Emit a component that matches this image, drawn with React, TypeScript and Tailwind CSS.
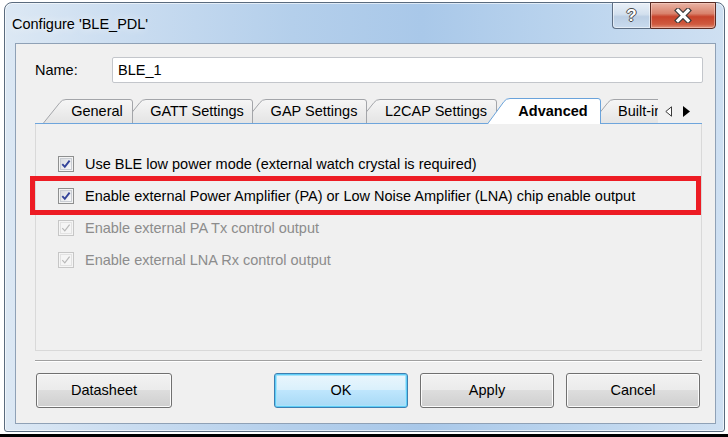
import clsx from 'clsx';

const TABS = [
  { label: 'General', w: 90, width: 'w-[90px]', z: 'z-[6]', ml: '' },
  { label: 'GATT Settings', w: 130, width: 'w-[130px]', z: 'z-[5]', ml: '-ml-[10px]' },
  { label: 'GAP Settings', w: 124, width: 'w-[124px]', z: 'z-[4]', ml: '-ml-[10px]' },
  { label: 'L2CAP Settings', w: 140, width: 'w-[140px]', z: 'z-[3]', ml: '-ml-[10px]' },
  { label: 'Advanced', w: 114, width: 'w-[114px]', z: 'z-[10]', ml: '-ml-[10px]', active: true },
  { label: 'Built-in', w: 67, width: 'w-[67px]', z: 'z-[1]', ml: '-ml-[10px]', clipped: true },
];

const OPTIONS = [
  { label: 'Use BLE low power mode (external watch crystal is required)', disabled: false },
  { label: 'Enable external Power Amplifier (PA) or Low Noise Amplifier (LNA) chip enable output', disabled: false },
  { label: 'Enable external PA Tx control output', disabled: true },
  { label: 'Enable external LNA Rx control output', disabled: true },
];

const S = 22;

function TabShape({ w, h, active, clipped, id }: { w: number; h: number; active?: boolean; clipped?: boolean; id: string }) {
  const right = clipped ? w : w - 0.5;
  const fill = `M0.5 ${h} L${S - 5} 3.5 Q${S - 3} 0.5 ${S + 1} 0.5 L${right - 2.5} 0.5 Q${right} 0.5 ${right} 3 L${right} ${h} Z`;
  const stroke = clipped
    ? `M0.5 ${h} L${S - 5} 3.5 Q${S - 3} 0.5 ${S + 1} 0.5 L${w} 0.5`
    : `M0.5 ${h} L${S - 5} 3.5 Q${S - 3} 0.5 ${S + 1} 0.5 L${right - 2.5} 0.5 Q${right} 0.5 ${right} 3 L${right} ${h}`;
  return (
    <svg className="absolute inset-0" width={w} height={h} viewBox={`0 0 ${w} ${h}`}>
      <defs>
        <linearGradient id={id} x1="0" y1="0" x2="0" y2="1">
          <stop offset="0" stopColor={active ? '#ffffff' : '#f6f6f6'} />
          <stop offset="1" stopColor={active ? '#ffffff' : '#e4e4e4'} />
        </linearGradient>
      </defs>
      <path d={fill} fill={`url(#${id})`} />
      <path d={stroke} fill="none" stroke={active ? '#6aa3db' : '#a3a5a9'} strokeWidth="1" />
    </svg>
  );
}

function CheckBox({ disabled }: { disabled?: boolean }) {
  return (
    <span
      className={clsx(
        'flex h-[16px] w-[16px] shrink-0 items-center justify-center border',
        disabled ? 'border-[#c6c6c6] bg-[#f5f5f5]' : 'border-[#8e8f8f] bg-[#f4f4f4]'
      )}
    >
      <span
        className={clsx(
          'flex h-[12px] w-[12px] items-center justify-center border',
          disabled ? 'border-[#e2e2e2] bg-[#f5f5f5]' : 'border-[#c9cdd3] bg-[linear-gradient(135deg,#d9dce1,#f9f9f9)]'
        )}
      >
        <svg width="10" height="10" viewBox="0 0 10 10">
          <path
            d="M1.3 5.2 L3.8 7.9 L8.6 1.6"
            fill="none"
            stroke={disabled ? '#b8b8b8' : '#34449a'}
            strokeWidth={disabled ? 1.2 : 1.9}
          />
        </svg>
      </span>
    </span>
  );
}

function DialogButton({ label, primary, width }: { label: string; primary?: boolean; width: string }) {
  return (
    <button
      className={clsx(
        'flex h-[35px] items-center justify-center rounded-[3px] border text-[14.5px] text-black',
        width,
        primary
          ? 'border-[#3c7fb1] bg-[linear-gradient(#eaf6fd_0%,#d9f0fc_50%,#bee6fd_50%,#a7d9f5_100%)] shadow-[inset_0_0_0_1px_#5fcdf7,inset_0_0_0_2px_#a8e3fa]'
          : 'border-[#707070] bg-[linear-gradient(#f2f2f2_0%,#ebebeb_50%,#dddddd_50%,#cfcfcf_100%)] shadow-[inset_0_0_0_1px_#fbfbfb]'
      )}
    >
      {label}
    </button>
  );
}

export default function App() {
  return (
    <div className="relative flex h-[437px] w-[728px] flex-col overflow-hidden bg-white font-['Liberation_Sans',Arial,sans-serif] text-[14.5px] leading-none text-black">
      <div className="pl-[4px] pt-[2px]">
        {/* Window frame */}
        <div className="relative flex h-[430px] w-[721px] flex-col rounded-t-[8px] rounded-b-[3px] border border-[#5a6b7e] bg-[linear-gradient(90deg,#dce8f4_0%,#c9dcf0_18%,#b4cfeb_40%,#a9c8e9_58%,#bcd5ee_80%,#cfe0f2_100%)] shadow-[inset_0_0_0_1px_rgba(255,255,255,0.6)]">
          <div className="flex h-[40px] items-center pl-[7px] pt-[2px] [text-shadow:0_0_8px_rgba(255,255,255,0.95)]">
            Configure 'BLE_PDL'
          </div>

          {/* Caption buttons */}
          <div className="absolute -top-px right-[8px] flex">
            <div className="flex h-[27px] w-[38px] items-center justify-center rounded-bl-[4px] border border-r-0 border-[#5d6e83] bg-[linear-gradient(#e9f0f8_0%,#d3e0ee_45%,#bccfe4_55%,#c9dbee_100%)] shadow-[inset_0_0_0_1px_rgba(255,255,255,0.5)]">
              <span className="text-[17px] font-bold text-white [text-shadow:1px_0_#4a4a4a,-1px_0_#4a4a4a,0_1px_#4a4a4a,0_-1px_#4a4a4a]">?</span>
            </div>
            <div className="flex h-[27px] w-[66px] items-center justify-center rounded-br-[4px] border border-[#5a2a22] bg-[linear-gradient(#e9b3a4_0%,#d9826c_42%,#c7432b_55%,#cf5a3f_85%,#e0927a_100%)] shadow-[inset_0_0_0_1px_rgba(255,220,210,0.45)]">
              <svg width="18" height="15" viewBox="0 0 18 15">
                <path d="M4 2.5 L14 12.5 M14 2.5 L4 12.5" stroke="#3b3b3b" strokeWidth="5.5" strokeLinecap="square" />
                <path d="M4 2.5 L14 12.5 M14 2.5 L4 12.5" stroke="#ffffff" strokeWidth="3.2" strokeLinecap="square" />
              </svg>
            </div>
          </div>

          {/* Client area */}
          <div className="ml-[10px] flex h-[381px] w-[701px] flex-col border border-[#8fa1b6] bg-[#f0f0f0]">
            <div className="ml-[19px] mr-[12px] mt-[13px] flex h-[26px] items-center">
              <span className="w-[77px]">Name:</span>
              <div className="flex h-[26px] flex-1 items-center rounded-[2px] border border-[#c3c6cb] bg-white pl-[5px]">
                BLE_1
              </div>
            </div>

            {/* Tabs */}
            <div className="ml-[19px] mr-[13px] mt-[16px] flex h-[25px] items-end border-b border-[#6ea5dc] pl-[8px]">
              {TABS.map((tab, i) => (
                <div
                  key={tab.label}
                  className={clsx(
                    'relative shrink-0',
                    tab.width,
                    tab.z,
                    tab.ml,
                    tab.active ? '-mb-px h-[26px]' : 'h-[24px]'
                  )}
                >
                  <TabShape w={tab.w} h={tab.active ? 26 : 24} active={tab.active} clipped={tab.clipped} id={`tab-g-${i}`} />
                  {tab.clipped ? (
                    <div className="relative ml-[27px] flex h-full items-center overflow-hidden whitespace-nowrap pt-px">
                      {tab.label}
                    </div>
                  ) : (
                    <div
                      className={clsx(
                        'relative flex h-full items-center justify-center whitespace-nowrap pl-[22px] pr-[4px] pt-px',
                        tab.active && 'font-bold'
                      )}
                    >
                      {tab.label}
                    </div>
                  )}
                </div>
              ))}
              <div className="ml-[7px] flex h-[24px] items-center gap-[11px]">
                <svg width="7" height="11" viewBox="0 0 7 11">
                  <path d="M6.5 0.8 L6.5 10.2 L0.8 5.5 Z" fill="#ffffff" stroke="#3a3a3a" strokeWidth="1" />
                </svg>
                <svg width="7" height="11" viewBox="0 0 7 11">
                  <path d="M0 0 L7 5.5 L0 11 Z" fill="#000000" />
                </svg>
              </div>
            </div>

            {/* Tab panel */}
            <div className="ml-[19px] mr-[13px] h-[227px] border-x border-b border-[#d9d9d9] pl-[22px] pt-[24px]">
              {OPTIONS.map((opt) => (
                <div key={opt.label} className="flex h-[32px] items-center gap-[11px]">
                  <CheckBox disabled={opt.disabled} />
                  <span className={opt.disabled ? 'text-[#8c8c8c]' : 'text-black'}>{opt.label}</span>
                </div>
              ))}
            </div>

            <div className="ml-[19px] mr-[13px] mt-[9px] border-t border-b border-t-[#a0a0a0] border-b-white" />

            <div className="ml-[20px] mr-[15px] mt-[11px] flex">
              <DialogButton label="Datasheet" width="w-[136px]" />
              <div className="ml-auto flex gap-[12px]">
                <DialogButton label="OK" width="w-[134px]" primary />
                <DialogButton label="Apply" width="w-[134px]" />
                <DialogButton label="Cancel" width="w-[134px]" />
              </div>
            </div>
          </div>
        </div>
      </div>

      <div className="mt-[2px] h-[3px] w-full bg-black" />

      {/* Red annotation box */}
      <div className="absolute left-[30px] top-[176px] z-20 h-[39px] w-[671px] border-[5px] border-[#ed1c24]" />
    </div>
  );
}
